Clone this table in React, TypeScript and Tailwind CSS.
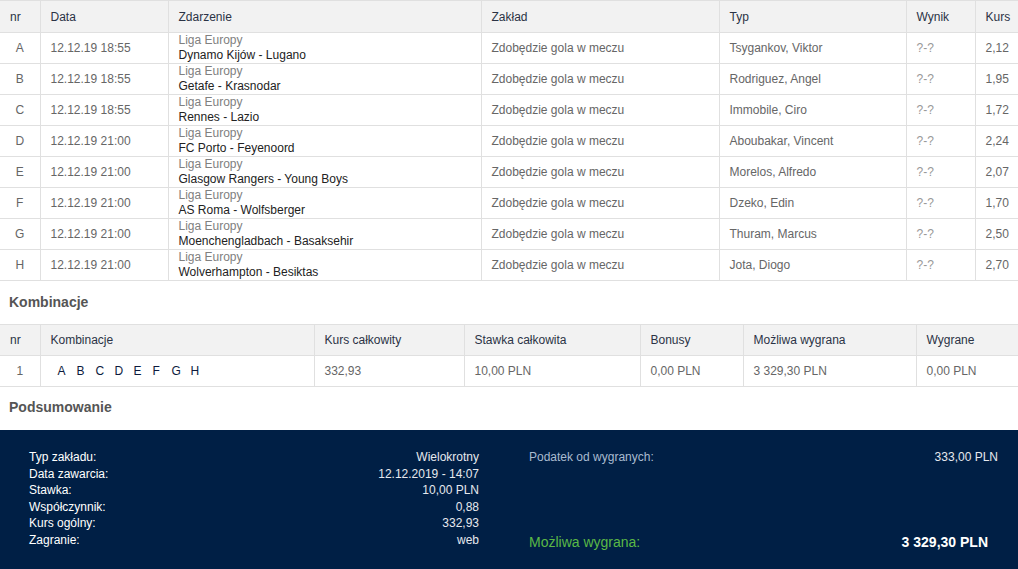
import React from "react";

const rows = [
  ["A", "12.12.19 18:55", "Dynamo Kijów - Lugano", "Tsygankov, Viktor", "2,12"],
  ["B", "12.12.19 18:55", "Getafe - Krasnodar", "Rodriguez, Angel", "1,95"],
  ["C", "12.12.19 18:55", "Rennes - Lazio", "Immobile, Ciro", "1,72"],
  ["D", "12.12.19 21:00", "FC Porto - Feyenoord", "Aboubakar, Vincent", "2,24"],
  ["E", "12.12.19 21:00", "Glasgow Rangers - Young Boys", "Morelos, Alfredo", "2,07"],
  ["F", "12.12.19 21:00", "AS Roma - Wolfsberger", "Dzeko, Edin", "1,70"],
  ["G", "12.12.19 21:00", "Moenchengladbach - Basaksehir", "Thuram, Marcus", "2,50"],
  ["H", "12.12.19 21:00", "Wolverhampton - Besiktas", "Jota, Diogo", "2,70"],
];

const thBase = "px-[10px] text-left font-normal text-[#2b3345] border-b border-r border-[#e0e0e0] last:border-r-0 align-middle";
const th = "h-[32px] " + thBase;
const th2 = "h-[31px] " + thBase;
const td = "h-[31px] px-[10px] text-[#666] border-b border-r border-[#e0e0e0] last:border-r-0 align-middle leading-[15px]";

export default function App() {
  return (
    <div className="w-[1018px] h-[569px] bg-white text-[12px] overflow-hidden" style={{ fontFamily: '"Liberation Sans", Arial, sans-serif' }}>
      <table className="w-[1018px] table-fixed border-collapse border-t border-[#e0e0e0]">
        <colgroup>
          <col className="w-[40px]" />
          <col className="w-[128px]" />
          <col className="w-[313px]" />
          <col className="w-[238px]" />
          <col className="w-[187px]" />
          <col className="w-[69px]" />
          <col className="w-[43px]" />
        </colgroup>
        <thead>
          <tr className="bg-[#f2f2f2]">
            <th className={th + " text-center"}>nr</th>
            <th className={th}>Data</th>
            <th className={th}>Zdarzenie</th>
            <th className={th}>Zakład</th>
            <th className={th}>Typ</th>
            <th className={th}>Wynik</th>
            <th className={th}>Kurs</th>
          </tr>
        </thead>
        <tbody>
          {rows.map((r) => (
            <tr key={r[0]}>
              <td className={td + " text-center"}>{r[0]}</td>
              <td className={td}>{r[1]}</td>
              <td className={td}>
                <div className="text-[#808080]">Liga Europy</div>
                <div className="text-[#222]">{r[2]}</div>
              </td>
              <td className={td}>Zdobędzie gola w meczu</td>
              <td className={td}>{r[3]}</td>
              <td className={td + " text-[#999]"}>?-?</td>
              <td className={td}>{r[4]}</td>
            </tr>
          ))}
        </tbody>
      </table>

      <div className="h-[43px] flex items-center pl-[9px] text-[14px] font-bold text-[#555]">Kombinacje</div>

      <table className="w-[1018px] table-fixed border-collapse border-t border-[#e0e0e0]">
        <colgroup>
          <col className="w-[40px]" />
          <col className="w-[274px]" />
          <col className="w-[150px]" />
          <col className="w-[176px]" />
          <col className="w-[103px]" />
          <col className="w-[173px]" />
          <col className="w-[102px]" />
        </colgroup>
        <thead>
          <tr className="bg-[#f2f2f2]">
            <th className={th2 + " text-center"}>nr</th>
            <th className={th2}>Kombinacje</th>
            <th className={th2}>Kurs całkowity</th>
            <th className={th2}>Stawka całkowita</th>
            <th className={th2}>Bonusy</th>
            <th className={th2}>Możliwa wygrana</th>
            <th className={th2}>Wygrane</th>
          </tr>
        </thead>
        <tbody>
          <tr>
            <td className={td + " text-center"}>1</td>
            <td className={td}>
              <div className="flex pl-[7px] text-[#0d1b3d]">
                {["A", "B", "C", "D", "E", "F", "G", "H"].map((l) => (
                  <span key={l} className="w-[19px]">{l}</span>
                ))}
              </div>
            </td>
            <td className={td}>332,93</td>
            <td className={td}>10,00 PLN</td>
            <td className={td}>0,00 PLN</td>
            <td className={td}>3 329,30 PLN</td>
            <td className={td}>0,00 PLN</td>
          </tr>
        </tbody>
      </table>

      <div className="h-[43px] flex items-center pl-[9px] pb-[2px] text-[14px] font-bold text-[#555]">Podsumowanie</div>

      <div className="h-[139px] bg-[#001f45] flex pt-[19px]">
        <div className="w-[450px] ml-[29px] leading-[16.6px]">
          {[
            ["Typ zakładu:", "Wielokrotny"],
            ["Data zawarcia:", "12.12.2019 - 14:07"],
            ["Stawka:", "10,00 PLN"],
            ["Współczynnik:", "0,88"],
            ["Kurs ogólny:", "332,93"],
            ["Zagranie:", "web"],
          ].map(([a, b]) => (
            <div key={a} className="flex justify-between">
              <span className="text-white">{a}</span>
              <span className="text-[#e6e9ee]">{b}</span>
            </div>
          ))}
        </div>
        <div className="w-[469px] ml-[50px] flex flex-col justify-between pb-[19px]">
          <div className="flex justify-between leading-[16.6px]">
            <span className="text-[#a9bbd0]">Podatek od wygranych:</span>
            <span className="text-[#e6e9ee]">333,00 PLN</span>
          </div>
          <div className="flex justify-between text-[14px] leading-[16px]">
            <span className="text-[#5bb846]">Możliwa wygrana:</span>
            <span className="font-bold text-white pr-[10px]">3 329,30 PLN</span>
          </div>
        </div>
      </div>
    </div>
  );
}
